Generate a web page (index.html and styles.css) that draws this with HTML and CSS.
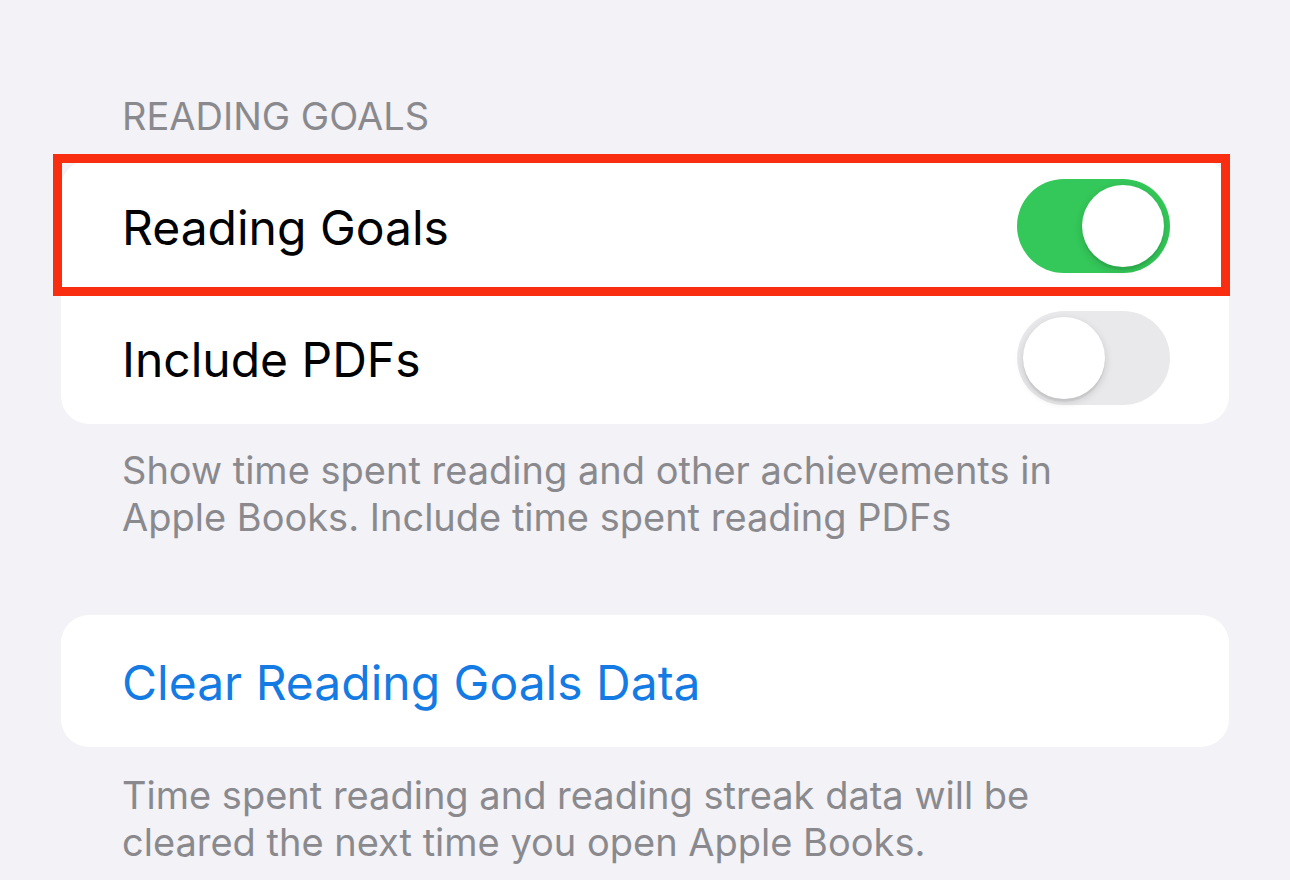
FILE: index.html
```html
<!DOCTYPE html>
<html lang="en">
<head>
  <meta charset="UTF-8">
  <meta name="viewport" content="width=device-width, initial-scale=1.0">
  <title>Reading Goals</title>
  <link rel="stylesheet" href="styles.css">
</head>
<body>
  <div class="page">
    <div class="section-header">READING GOALS</div>

    <div class="card">
      <div class="row highlighted">
        <span class="label">Reading Goals</span>
        <div class="switch on"><div class="knob"></div></div>
        <div class="highlight-box"></div>
      </div>
      <div class="row">
        <span class="label">Include PDFs</span>
        <div class="switch"><div class="knob"></div></div>
      </div>
    </div>

    <p class="section-footer">Show time spent reading and other achievements in Apple Books. Include time spent reading PDFs</p>

    <div class="card second">
      <div class="row">
        <span class="label action">Clear Reading Goals Data</span>
      </div>
    </div>

    <p class="section-footer last">Time spent reading and reading streak data will be cleared the next time you open Apple Books.</p>
  </div>
</body>
</html>
```

FILE: styles.css
```css
body {
  margin: 0;
  padding: 0;
  background-color: #f2f2f7;
  font-family: Inter, 'Liberation Sans', sans-serif;
  color: #000;
}
.page {
  padding: 93px 61px 0 61px;
}
.section-header {
  font-size: 38px;
  line-height: 47px;
  color: #8a8a8e;
  padding-left: 61px;
  margin-bottom: 20px;
}
.card {
  background-color: #fff;
  border-radius: 28px;
}
.card.second {
  margin-top: 74px;
}
.row {
  position: relative;
  display: flex;
  align-items: center;
  justify-content: space-between;
  height: 132px;
  padding: 0 59px 0 61px;
}
.label {
  font-size: 48px;
  padding-top: 3px;
}
.label.action {
  color: #157be4;
}
.highlight-box {
  position: absolute;
  left: -8px;
  right: -1px;
  top: -6px;
  bottom: -4px;
  border: 9px solid #f92d10;
}
.switch {
  position: relative;
  width: 153px;
  height: 94px;
  border-radius: 47px;
  background-color: #e9e9eb;
}
.switch.on {
  background-color: #34c759;
}
.knob {
  position: absolute;
  top: 6px;
  left: 6px;
  width: 82px;
  height: 82px;
  border-radius: 50%;
  background-color: #fff;
  box-shadow: 0 3px 8px rgba(0, 0, 0, 0.15), 0 3px 1px rgba(0, 0, 0, 0.06);
}
.switch.on .knob {
  left: auto;
  right: 6px;
}
.section-footer {
  margin: 23px 0 0 0;
  padding: 0 100px 0 61px;
  font-size: 38px;
  line-height: 47px;
  color: #8a8a8e;
}
.section-footer.last {
  margin-top: 25px;
}
```
